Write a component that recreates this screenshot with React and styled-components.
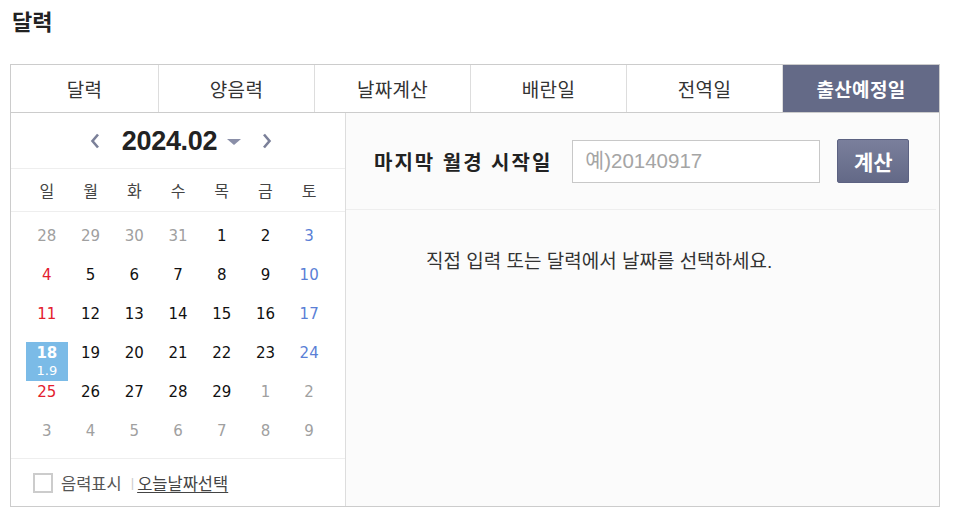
import styled, { createGlobalStyle } from "styled-components";

const GlobalStyle = createGlobalStyle`
  body {
    margin: 0;
    background: #fff;
    font-family: "Liberation Sans", "Noto Sans CJK KR", sans-serif;
    color: #333;
  }
`;

const Page = styled.div`
  width: 956px;
  padding: 0 0 0 10px;
`;

const Title = styled.h2`
  margin: 0;
  height: 64px;
  padding: 9px 0 0 2px;
  box-sizing: border-box;
  font-size: 22px;
  line-height: 28px;
  font-weight: bold;
  color: #222;
`;

const Box = styled.div`
  width: 930px;
  border: 1px solid #ccc;
  box-sizing: border-box;
`;

const Tabs = styled.ul`
  display: flex;
  margin: 0;
  padding: 0;
  list-style: none;
  border-bottom: 1px solid #ccc;
`;

const Tab = styled.li`
  flex: 0 0 ${(p) => p.$w}px;
  height: 47px;
  display: flex;
  align-items: center;
  justify-content: center;
  font-size: 19px;
  letter-spacing: 0.3px;
  color: ${(p) => (p.$active ? "#fff" : "#333")};
  font-weight: ${(p) => (p.$active ? "bold" : "normal")};
  background: ${(p) => (p.$active ? "#646a87" : "#fff")};
  border-right: 1px solid #ddd;
  box-sizing: border-box;
  &:last-child {
    border-right: 0;
  }
`;

const Body = styled.div`
  display: flex;
  height: 393px;
`;

const CalPanel = styled.div`
  width: 335px;
  border-right: 1px solid #ddd;
  box-sizing: border-box;
  background: #fff;
  display: flex;
  flex-direction: column;
`;

const CalHead = styled.div`
  height: 56px;
  border-bottom: 1px solid #eee;
  box-sizing: border-box;
  display: flex;
  align-items: center;
  justify-content: center;
  padding-left: 6px;
`;

const NavBtn = styled.button`
  border: 0;
  background: none;
  padding: 0;
  width: 10px;
  height: 16px;
  display: flex;
  cursor: pointer;
`;

const YearMonth = styled.span`
  margin: 0 10px 0 22px;
  font-size: 27px;
  font-weight: bold;
  letter-spacing: -0.3px;
  color: #222;
  line-height: 30px;
`;

const Caret = styled.span`
  width: 0;
  height: 0;
  border-left: 7px solid transparent;
  border-right: 7px solid transparent;
  border-top: 6px solid #8a8fa8;
  margin: 2px 21px 0 0;
`;

const Grid = styled.div`
  display: grid;
  grid-template-columns: repeat(7, 1fr);
  padding: 0 14px;
`;

const WeekRow = styled(Grid)`
  height: 42px;
  align-items: center;
  border-bottom: 1px solid #eee;
  font-size: 16px;
  color: #444;
  text-align: center;
`;

const Days = styled(Grid)`
  padding-top: 13px;
  grid-auto-rows: 39px;
  height: 247px;
  box-sizing: border-box;
  border-bottom: 1px solid #eee;
`;

const dayColor = (p) => {
  if (p.$sel) return "#fff";
  if (p.$other) return "#a0a0a0";
  if (p.$sun) return "#e3202e";
  if (p.$sat) return "#5a7fd6";
  return "#111";
};

const Day = styled.div`
  margin: 0 1px;
  display: flex;
  flex-direction: column;
  align-items: center;
  font-family: "DejaVu Sans", "Liberation Sans", sans-serif;
  font-size: 15px;
  line-height: 22px;
  color: ${dayColor};
  background: ${(p) => (p.$sel ? "#7bbbe7" : "transparent")};
  font-weight: ${(p) => (p.$sel ? "bold" : "normal")};
`;

const Lunar = styled.span`
  font-size: 13px;
  line-height: 14px;
  font-weight: normal;
`;

const Foot = styled.div`
  flex: 1;
  display: flex;
  align-items: center;
  padding: 0 0 0 22px;
  font-size: 16.5px;
  color: #555;
`;

const Check = styled.span`
  width: 16px;
  height: 16px;
  border: 2px solid #ccc;
  background: #fff;
  margin-right: 8px;
`;

const Sep = styled.span`
  color: #ccc;
  margin: 0 3px 0 9px;
  font-size: 13px;
`;

const TodayLink = styled.a`
  color: #444;
  text-decoration: underline;
  text-underline-offset: 2px;
`;

const FormPanel = styled.div`
  flex: 1;
  background: #fbfbfb;
  padding-right: 3px;
`;

const FormRow = styled.div`
  height: 97px;
  border-bottom: 1px solid #eee;
  box-sizing: border-box;
  display: flex;
  align-items: center;
  padding: 0 0 0 28px;
`;

const Label = styled.label`
  font-size: 20px;
  font-weight: bold;
  letter-spacing: 2px;
  color: #222;
  margin-right: 20px;
`;

const Input = styled.input`
  width: 248px;
  height: 43px;
  box-sizing: border-box;
  border: 1px solid #c8c8c8;
  background: #fff;
  padding: 0 12px;
  font-family: "Liberation Sans", "Noto Sans CJK KR", sans-serif;
  font-size: 20.5px;
  color: #333;
  outline: none;
  &::placeholder {
    color: #a5a5a5;
  }
`;

const CalcBtn = styled.button`
  margin-left: 17px;
  width: 72px;
  height: 44px;
  border: 1px solid #5c6282;
  border-radius: 2px;
  background: linear-gradient(#7a7f9c, #636987);
  color: #fff;
  font-family: "Liberation Sans", "Noto Sans CJK KR", sans-serif;
  font-size: 21px;
  font-weight: bold;
  cursor: pointer;
`;

const Message = styled.p`
  margin: 39px 0 0;
  padding-left: 80px;
  font-size: 19px;
  line-height: 26px;
  color: #333;
`;

const Chevron = ({ dir }) => (
  <svg width="10" height="16" viewBox="0 0 10 16">
    <polyline
      points={dir === "left" ? "8,1.5 2.5,8 8,14.5" : "2,1.5 7.5,8 2,14.5"}
      fill="none"
      stroke="#7b8099"
      strokeWidth="2.6"
    />
  </svg>
);

const tabs = [
  { label: "달력", w: 148 },
  { label: "양음력", w: 156 },
  { label: "날짜계산", w: 156 },
  { label: "배란일", w: 156 },
  { label: "전역일", w: 156 },
  { label: "출산예정일", w: 156, active: true },
];

const weekdays = ["일", "월", "화", "수", "목", "금", "토"];

const weeks = [
  [[28, 1], [29, 1], [30, 1], [31, 1], [1], [2], [3]],
  [[4], [5], [6], [7], [8], [9], [10]],
  [[11], [12], [13], [14], [15], [16], [17]],
  [[18, 0, "1.9"], [19], [20], [21], [22], [23], [24]],
  [[25], [26], [27], [28], [29], [1, 1], [2, 1]],
  [[3, 1], [4, 1], [5, 1], [6, 1], [7, 1], [8, 1], [9, 1]],
];

export default function App() {
  return (
    <Page>
      <GlobalStyle />
      <Title>달력</Title>
      <Box>
        <Tabs>
          {tabs.map((t) => (
            <Tab key={t.label} $w={t.w} $active={t.active}>
              {t.label}
            </Tab>
          ))}
        </Tabs>
        <Body>
          <CalPanel>
            <CalHead>
              <NavBtn aria-label="이전 달">
                <Chevron dir="left" />
              </NavBtn>
              <YearMonth>2024.02</YearMonth>
              <Caret />
              <NavBtn aria-label="다음 달">
                <Chevron dir="right" />
              </NavBtn>
            </CalHead>
            <WeekRow>
              {weekdays.map((d) => (
                <span key={d}>{d}</span>
              ))}
            </WeekRow>
            <Days>
              {weeks.flatMap((week, wi) =>
                week.map(([n, other, lunar], di) => (
                  <Day
                    key={`${wi}-${di}`}
                    $other={other}
                    $sun={di === 0}
                    $sat={di === 6}
                    $sel={!!lunar}
                  >
                    {n}
                    {lunar && <Lunar>{lunar}</Lunar>}
                  </Day>
                ))
              )}
            </Days>
            <Foot>
              <Check />
              음력표시
              <Sep>|</Sep>
              <TodayLink>오늘날짜선택</TodayLink>
            </Foot>
          </CalPanel>
          <FormPanel>
            <FormRow>
              <Label>마지막 월경 시작일</Label>
              <Input placeholder="예)20140917" />
              <CalcBtn>계산</CalcBtn>
            </FormRow>
            <Message>직접 입력 또는 달력에서 날짜를 선택하세요.</Message>
          </FormPanel>
        </Body>
      </Box>
    </Page>
  );
}
